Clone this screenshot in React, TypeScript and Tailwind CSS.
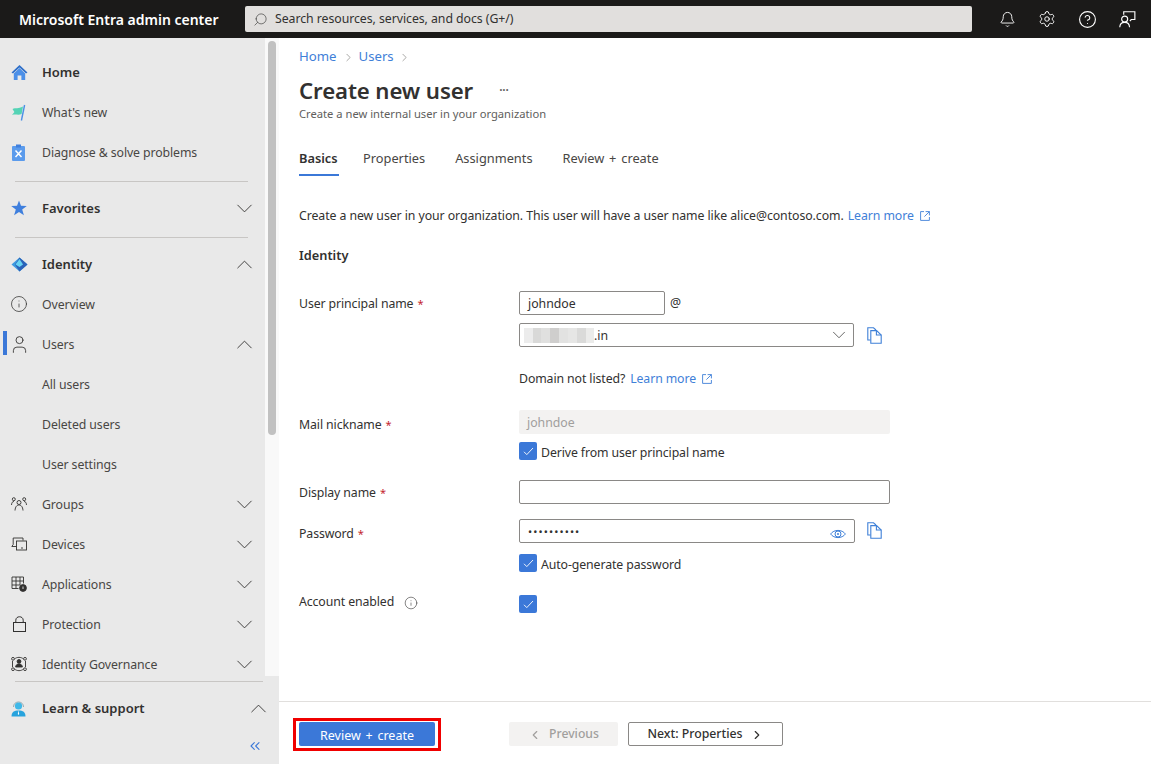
import type { ReactNode } from 'react';
import { Bell, ChevronDown, ChevronLeft, ChevronRight, ChevronUp, ChevronsLeft, CircleHelp, Info, Search, Settings, User } from 'lucide-react';

function Home() {
  return (
    <svg width="17" height="17" viewBox="0 0 17 17">
      <path d="M8.5 1 L0.5 8.6 L2 9.6 L8.5 3.4 L15 9.6 L16.5 8.6 Z" fill="#2f6fc9" />
      <path d="M2.8 9.4 L8.5 4 L14.2 9.4 V16 H10.4 V11.6 H6.6 V16 H2.8 Z" fill="#4b8fe8" />
    </svg>
  );
}

function Flag() {
  return (
    <svg width="16" height="17" viewBox="0 0 16 17">
      <path d="M1.5 5 C5 3.4 7 5.4 12 2.6 L10.6 10 C7 11.6 4.6 9.6 1 11 L3.4 8 Z" fill="#54d3b5" />
      <path d="M13.6 1 L10.4 16.5" stroke="#4a8fe6" strokeWidth="1.4" />
    </svg>
  );
}

function Clipboard() {
  return (
    <svg width="15" height="17" viewBox="0 0 15 17">
      <rect x="1" y="2" width="13" height="15" rx="1" fill="#5b9bec" />
      <rect x="5" y="0.5" width="5" height="3" fill="#3f7fdd" />
      <path d="M4.5 6.5 L10.5 13 M10.5 6.5 L4.5 13" stroke="#fff" strokeWidth="1.5" />
    </svg>
  );
}

function Star() {
  return (
    <svg width="16" height="16" viewBox="0 0 16 16">
      <path d="M8 0.5 L10 5.8 L15.8 6 L11.2 9.6 L12.9 15.3 L8 12 L3.1 15.3 L4.8 9.6 L0.2 6 L6 5.8 Z" fill="#3f7fdd" />
    </svg>
  );
}

function Diamond() {
  return (
    <svg width="17" height="15" viewBox="0 0 17 15">
      <path d="M8.5 0.5 L0.5 7.5 L8.5 14.5 L16.5 7.5 Z" fill="#3d9be0" />
      <path d="M8.5 0.5 L4 7.5 L8.5 14.5 L16.5 7.5 Z" fill="#2a62b8" />
      <path d="M8.5 2 L4.5 7.5 L8.5 10 L12 7.5 Z" fill="#67d3f2" />
    </svg>
  );
}

function Groups() {
  return (
    <svg width="16" height="14" viewBox="0 0 16 14" fill="none" stroke="#323130" strokeWidth="0.9">
      <circle cx="8" cy="5.5" r="2" />
      <circle cx="2.8" cy="2.2" r="1.5" />
      <circle cx="13.2" cy="2.2" r="1.5" />
      <path d="M4 13.5 C4.3 9.5 6 8 8 8 C10 8 11.7 9.5 12 13.5 M0.5 8 C0.7 5.5 1.5 4.5 3 4.5 M15.5 8 C15.3 5.5 14.5 4.5 13 4.5" />
    </svg>
  );
}

function Devices() {
  return (
    <svg width="16" height="14" viewBox="0 0 16 14" fill="none" stroke="#323130" strokeWidth="0.9">
      <path d="M5.5 9.5 H0.8 L2.2 7.5 V1 H12 V3.5" />
      <rect x="5.5" y="4" width="10" height="9" />
      <path d="M10 11 H12" />
    </svg>
  );
}

function Apps() {
  return (
    <svg width="16" height="16" viewBox="0 0 16 16" fill="none" stroke="#323130" strokeWidth="0.9">
      <path d="M12.5 7.5 V1 H1 V12.5 H7.5 M1 5 H12.5 M1 9 H9 M5 1 V12.5 M9 1 V9" />
      <circle cx="12" cy="12" r="3.4" fill="#323130" />
      <path d="M12 10.5 V13" stroke="#e9e9e9" />
    </svg>
  );
}

function LockIcon() {
  return (
    <svg width="13" height="16" viewBox="0 0 13 16" fill="none" stroke="#323130" strokeWidth="1">
      <rect x="0.5" y="6.5" width="12" height="9" />
      <path d="M2.8 6.5 V4.2 C2.8 -0.4 10.2 -0.4 10.2 4.2 V6.5" />
    </svg>
  );
}

function Governance() {
  return (
    <svg width="16" height="16" viewBox="0 0 16 16" fill="none" stroke="#323130" strokeWidth="0.9">
      <path d="M3.5 3 C6 0.8 10 0.8 12.5 3 M3.5 13 C6 15.2 10 15.2 12.5 13 M1.5 5 V11 M14.5 5 V11" />
      <circle cx="2" cy="2.8" r="1.4" />
      <circle cx="14" cy="2.8" r="1.4" />
      <circle cx="2" cy="13.2" r="1.4" />
      <circle cx="14" cy="13.2" r="1.4" />
      <circle cx="8" cy="5.4" r="1.9" fill="#323130" />
      <path d="M4.6 11 C5 8.5 6.4 8 8 8 C9.6 8 11 8.5 11.4 11 Z" fill="#323130" />
    </svg>
  );
}

function Support() {
  return (
    <svg width="15" height="17" viewBox="0 0 15 17">
      <path d="M2.5 7 C2.5 0.3 12.5 0.3 12.5 7" fill="none" stroke="#8aa0a8" strokeWidth="0.9" />
      <circle cx="7.5" cy="6" r="3.6" fill="#3fb8e8" />
      <path d="M0.5 16.5 C0.5 12 3 10.4 7.5 10.4 C12 10.4 14.5 12 14.5 16.5 Z" fill="#27a3dd" />
      <path d="M7.5 10.4 L6.8 14 L7.5 15 L8.2 14 Z" fill="#fff" />
    </svg>
  );
}

function Feedback() {
  return (
    <svg width="17" height="17" viewBox="0 0 18 18" fill="none" stroke="#fff" strokeWidth="1.2">
      <path d="M5 4 V0.8 H16.8 V9 H13 L11.5 10.6" />
      <circle cx="6" cy="8.6" r="3.2" />
      <path d="M0.8 17.2 C1 13.4 3 12 6 12 C9 12 11 13.4 11.2 17.2" />
    </svg>
  );
}

function Copy() {
  return (
    <svg width="15" height="17" viewBox="0 0 15 17" fill="none" stroke="#3f80d8" strokeWidth="1.1">
      <path d="M3.5 13 H0.8 V0.8 H6.5 L9 3" />
      <path d="M3.8 3.6 H9.6 L14.2 8 V16.2 H3.8 Z" />
      <path d="M9.4 3.6 V8 H14.2" />
    </svg>
  );
}

function External() {
  return (
    <svg width="10" height="10" viewBox="0 0 10 10" fill="none" stroke="#3f80d8" strokeWidth="0.9">
      <path d="M4 0.6 H0.6 V9.4 H9.4 V6 M5.6 0.6 H9.4 V4.4 M9.4 0.6 L4.4 5.6" />
    </svg>
  );
}

function EyeIcon() {
  return (
    <svg width="16" height="10" viewBox="0 0 16 10" fill="none" stroke="#3f80d8" strokeWidth="1">
      <path d="M0.6 5 C4 0.2 12 0.2 15.4 5 C12 9.8 4 9.8 0.6 5 Z" />
      <circle cx="8" cy="5" r="3" />
      <circle cx="8" cy="5" r="1" fill="#3f80d8" stroke="none" />
    </svg>
  );
}

function Check() {
  return (
    <div className="w-[18px] h-[18px] rounded-[2px] bg-[#3b78d8] flex items-center justify-center shrink-0">
      <svg width="11" height="9" viewBox="0 0 11 9" fill="none" stroke="#fff" strokeWidth="0.9">
        <path d="M1 4.8 L3.8 7.6 L10 1" />
      </svg>
    </div>
  );
}

function NavRow({ icon, label, bold, chevron, active }: { icon?: ReactNode; label: string; bold?: boolean; chevron?: 'up' | 'down'; active?: boolean }) {
  return (
    <div className="h-10 flex items-center relative shrink-0">
      {active && <div className="absolute left-[3px] top-[7px] w-1 h-6 bg-[#3b78d8]" />}
      <div className="w-[42px] pl-[11px] flex items-center shrink-0">{icon}</div>
      <span className={bold ? 'flex-1 pt-[2px] text-[13px] font-semibold text-[#323130]' : 'flex-1 pt-[2px] text-[12.3px] tracking-[-0.1px] text-[#484644]'}>{label}</span>
      {chevron === 'down' && <ChevronDown size={27} strokeWidth={0.8} className="mr-[7px] text-[#323130]" />}
      {chevron === 'up' && <ChevronUp size={27} strokeWidth={0.8} className="mr-[7px] text-[#323130]" />}
    </div>
  );
}

function Label({ text, required, className, children }: { text: string; required?: boolean; className: string; children?: ReactNode }) {
  return (
    <div className={`w-[220px] shrink-0 h-6 flex items-center text-[12.3px] tracking-[-0.1px] text-[#323130] ${className}`}>
      {text}
      {required && <span className="ml-1 text-[11px] text-[#c4262e]">*</span>}
      {children}
    </div>
  );
}

const blur = ['w-[9px] bg-[#ececec]', 'w-[8px] bg-[#d9d9d8]', 'w-[9px] bg-[#e0e0df]', 'w-[9px] bg-[#cfcecd]', 'w-[9px] bg-[#e2e2e1]', 'w-[9px] bg-[#e6e6e5]', 'w-[9px] bg-[#dadad9]', 'w-[8px] bg-[#ebebea]'];

export default function App() {
  return (
    <div className="w-[1151px] h-[764px] flex flex-col overflow-hidden bg-white font-['Noto_Sans',sans-serif] text-[#323130]">
      <header className="h-[38px] shrink-0 bg-[#1b1a19] flex items-center">
        <div className="w-[245px] pl-[19px] text-[14px] font-semibold text-white shrink-0">Microsoft Entra admin center</div>
        <div className="w-[727px] h-[26px] bg-[#e1dfdd] rounded-[2px] flex items-center pl-2 gap-[7px] text-[12.3px] tracking-[-0.05px] text-[#323130]">
          <Search size={15} strokeWidth={1} className="-scale-x-100" />
          Search resources, services, and docs (G+/)
        </div>
        <div className="flex-1 flex items-center pl-[15px] text-white">
          <div className="w-10 flex justify-center"><Bell size={17} strokeWidth={1.3} /></div>
          <div className="w-10 flex justify-center"><Settings size={18} strokeWidth={1.3} /></div>
          <div className="w-10 flex justify-center"><CircleHelp size={19} strokeWidth={1.4} /></div>
          <div className="w-10 flex justify-center"><Feedback /></div>
        </div>
      </header>

      <div className="flex-1 flex min-h-0">
        <aside className="w-[279px] shrink-0 flex flex-col bg-[#e9e9e9]">
          <div className="h-[638px] flex shrink-0 overflow-hidden">
            <nav className="w-[265px] shrink-0 flex flex-col pt-[14px] overflow-hidden">
              <NavRow icon={<Home />} label="Home" bold />
              <NavRow icon={<Flag />} label="What's new" />
              <NavRow icon={<Clipboard />} label="Diagnose & solve problems" />
              <div className="h-px bg-[#c8c6c4] ml-[15px] mr-[17px] mt-[9px] shrink-0" />
              <div className="mt-[6px]"><NavRow icon={<Star />} label="Favorites" bold chevron="down" /></div>
              <div className="h-px bg-[#c8c6c4] ml-[15px] mr-[17px] mt-[9px] shrink-0" />
              <div className="mt-[6px]"><NavRow icon={<Diamond />} label="Identity" bold chevron="up" /></div>
              <NavRow icon={<Info size={18} strokeWidth={1} className="text-[#323130] ml-[-1px]" />} label="Overview" />
              <NavRow icon={<User size={21} strokeWidth={1} className="text-[#323130] ml-[-2px]" />} label="Users" chevron="up" active />
              <NavRow label="All users" />
              <NavRow label="Deleted users" />
              <NavRow label="User settings" />
              <NavRow icon={<Groups />} label="Groups" chevron="down" />
              <NavRow icon={<Devices />} label="Devices" chevron="down" />
              <NavRow icon={<Apps />} label="Applications" chevron="down" />
              <NavRow icon={<span className="pl-[2px]"><LockIcon /></span>} label="Protection" chevron="down" />
              <NavRow icon={<Governance />} label="Identity Governance" chevron="down" />
            </nav>
            <div className="w-[14px] shrink-0 bg-[#f9f9f9] pt-[3px] pl-[3px]">
              <div className="w-2 h-[394px] rounded bg-[#c1c1c1]" />
            </div>
          </div>
          <div className="flex-1 flex flex-col">
            <div className="h-px bg-[#c8c6c4] ml-[15px] mr-4 mt-[5px]" />
            <div className="mt-[6px]"><NavRow icon={<Support />} label="Learn & support" bold chevron="up" /></div>
            <div className="flex justify-end pr-[16px] mt-[10px]">
              <ChevronsLeft size={16} strokeWidth={1.6} className="text-[#3b78d8]" />
            </div>
          </div>
        </aside>

        <main className="flex-1 min-w-0 flex flex-col">
          <div className="h-[663px] shrink-0 pl-5 pr-5 pt-[9px]">
            <div className="h-[18px] pt-[2px] flex items-center text-[13.2px] text-[#3f80d8]">
              Home
              <ChevronRight size={13} strokeWidth={1} className="ml-[5px] mr-[4px] text-[#605e5c]" />
              Users
              <ChevronRight size={13} strokeWidth={1} className="mx-[4px] text-[#605e5c]" />
            </div>
            <div className="mt-[10px] h-[30px] pt-[2px] flex items-center text-[22.2px] tracking-[-0.1px] font-semibold text-[#323130]">
              Create new user
              <span className="ml-[26px] text-[12px] text-[#605e5c]">···</span>
            </div>
            <div className="mt-px h-4 flex items-center text-[11.2px] text-[#605e5c]">Create a new internal user in your organization</div>

            <div className="mt-5 h-[34px] flex items-start text-[12.8px] text-[#484644]">
              <div className="h-[34px] w-10 border-b-2 border-[#3b78d8] pt-[7px] font-semibold text-[#323130]">Basics</div>
              <div className="pt-[7px] ml-6">Properties</div>
              <div className="pt-[7px] ml-[30px]">Assignments</div>
              <div className="pt-[7px] ml-[30px] [word-spacing:1.5px]">Review + create</div>
            </div>

            <div className="mt-[30px] h-[18px] pt-[2px] flex items-center text-[12.3px] tracking-[-0.07px]">
              Create a new user in your organization. This user will have a user name like alice@contoso.com.
              <span className="ml-1 text-[#3f80d8]">Learn more</span>
              <span className="ml-[6px]"><External /></span>
            </div>
            <div className="mt-[22px] h-[18px] pt-[2px] flex items-center text-[12.8px] font-semibold">Identity</div>

            <div className="mt-[27px] flex">
              <Label text="User principal name" required className="pt-[2px]" />
              <div className="flex flex-col">
                <div className="flex items-center">
                  <div className="w-[146px] h-6 border border-[#8a8886] rounded-[2px] flex items-center pl-2 pt-[2px] text-[12.3px]">johndoe</div>
                  <span className="ml-[5px] text-[12.3px]">@</span>
                </div>
                <div className="mt-2 flex items-center">
                  <div className="w-[335px] h-6 border border-[#8a8886] rounded-[2px] flex items-center pl-1 text-[12.3px]">
                    <div className="flex h-[15px]">
                      {blur.map((c, i) => <div key={i} className={c} />)}
                    </div>
                    <span className="pt-[2px]">.in</span>
                    <ChevronDown size={22} strokeWidth={0.8} className="ml-auto mr-[3px]" />
                  </div>
                  <span className="ml-[13px]"><Copy /></span>
                </div>
                <div className="mt-[22px] h-[18px] pt-[2px] flex items-center text-[12.3px] tracking-[-0.1px]">
                  Domain not listed?
                  <span className="ml-[5px] text-[#3f80d8]">Learn more</span>
                  <span className="ml-[6px]"><External /></span>
                </div>
              </div>
            </div>

            <div className="mt-[23px] flex">
              <Label text="Mail nickname" required className="pt-[7px]" />
              <div className="flex flex-col">
                <div className="w-[371px] h-6 bg-[#f3f2f1] rounded-[2px] flex items-center pl-2 pt-[2px] text-[12.3px] text-[#a19f9d]">johndoe</div>
                <div className="mt-2 h-[18px] flex items-center gap-[4px] text-[12.3px] tracking-[-0.1px]"><Check /><span className="pt-[4px]">Derive from user principal name</span></div>
              </div>
            </div>

            <div className="mt-5 flex">
              <Label text="Display name" required className="pt-[2px]" />
              <div className="w-[371px] h-6 border border-[#8a8886] rounded-[2px]" />
            </div>

            <div className="mt-[15px] flex">
              <Label text="Password" required className="pt-[6px]" />
              <div className="flex flex-col">
                <div className="flex items-center">
                  <div className="w-[336px] h-6 border border-[#8a8886] rounded-[2px] flex items-center pl-2 pr-2 text-[12.5px]">
                    <span className="tracking-[1.1px] text-[11px] pt-[2px]">••••••••••</span>
                    <span className="ml-auto mt-[6px]"><EyeIcon /></span>
                  </div>
                  <span className="ml-3 -mt-[2px]"><Copy /></span>
                </div>
                <div className="mt-[11px] h-[18px] flex items-center gap-[4px] text-[12.3px] tracking-[-0.1px]"><Check /><span className="pt-[4px]">Auto-generate password</span></div>
              </div>
            </div>

            <div className="mt-[23px] flex">
              <Label text="Account enabled" className="pb-[10px]">
                <Info size={14} strokeWidth={1} className="ml-[10px] mt-px text-[#323130]" />
              </Label>
              <Check />
            </div>
          </div>

          <footer className="flex-1 border-t border-[#e1dfdd] pl-[14px] pt-4 flex items-start">
            <div className="border-[3px] border-[#f00000] pt-px pb-[2px] px-[3px] w-[148px]">
              <div className="w-[136px] h-6 rounded-[2px] bg-[#3b78d8] flex items-center justify-center text-[12.5px] [word-spacing:1.5px] text-white pt-1">Review + create</div>
            </div>
            <div className="ml-[68px] mt-1 w-[109px] h-6 rounded-[2px] bg-[#f3f2f1] flex items-center justify-center gap-[7px] pt-px text-[12.2px] font-medium text-[#a19f9d]">
              <ChevronLeft size={14} strokeWidth={2} />Previous
            </div>
            <div className="ml-[10px] mt-1 w-[155px] h-6 rounded-[2px] border border-[#8a8886] flex items-center justify-center gap-[7px] pt-px text-[12.3px] font-medium text-[#323130]">
              Next: Properties<ChevronRight size={14} strokeWidth={2} />
            </div>
          </footer>
        </main>
      </div>
    </div>
  );
}
